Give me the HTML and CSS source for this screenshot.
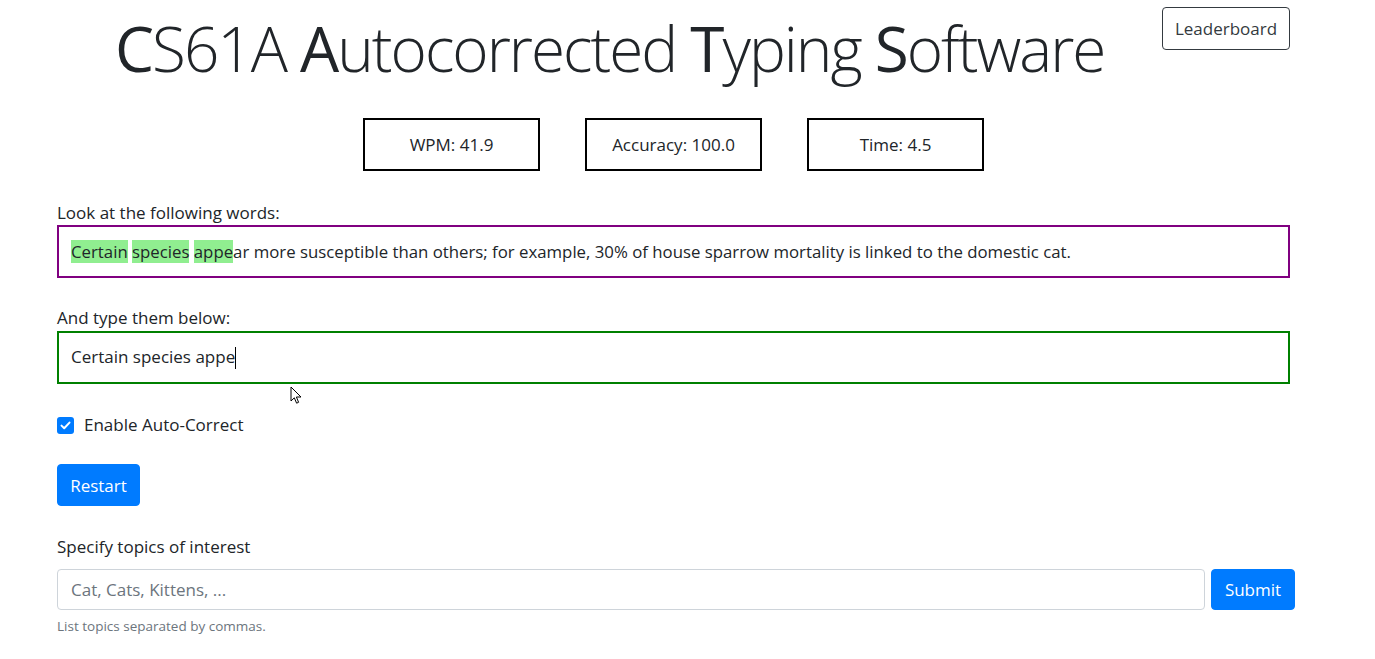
FILE: index.html
```html
<!DOCTYPE html>
<html>
<head>
<meta charset="utf-8">
<link rel="stylesheet" href="styles.css">
</head>
<body>
<div class="page">
  <header class="top">
    <h1 class="title"><span class="cap">C</span>S61A <span class="cap">A</span>utocorrected <span class="cap">T</span>yping <span class="cap">S</span>oftware</h1>
    <button class="btn-outline">Leaderboard</button>
  </header>
  <div class="stats">
    <div class="stat">WPM: 41.9</div>
    <div class="stat">Accuracy: 100.0</div>
    <div class="stat">Time: 4.5</div>
  </div>
  <div class="label first">Look at the following words:</div>
  <div class="prompt"><span class="hl">Certain</span> <span class="hl">species</span> <span class="hl">appe</span>ar more susceptible than others; for example, 30% of house sparrow mortality is linked to the domestic cat.</div>
  <div class="label second">And type them below:</div>
  <div class="typed">Certain species appe<span class="caret"></span></div>
  <label class="check">
    <span class="box"><svg width="11" height="9" viewBox="0 0 11 9"><path d="M1.5 4.6 L4.2 7.2 L9.5 1.6" fill="none" stroke="#fff" stroke-width="2" stroke-linecap="round" stroke-linejoin="round"/></svg></span>
    Enable Auto-Correct
  </label>
  <button class="btn-primary restart">Restart</button>
  <div class="label topics">Specify topics of interest</div>
  <div class="topic-row">
    <div class="topic-input">Cat, Cats, Kittens, ...</div>
    <button class="btn-primary submit">Submit</button>
  </div>
  <div class="hint">List topics separated by commas.</div>
  <svg class="cursor" width="12" height="19" viewBox="0 0 12 19"><path d="M1 1 L1 15 L4.3 11.8 L6.6 17.2 L8.6 16.3 L6.4 11 L11 11 Z" fill="#fff" stroke="#000" stroke-width="1"/></svg>
</div>
</body>
</html>
```
FILE: styles.css
```css
* { box-sizing: border-box; }
html, body { margin: 0; padding: 0; background: #fff; }
body {
  font-family: "Open Sans", "Noto Sans", sans-serif;
  font-size: 17px;
  color: #212529;
}
.page {
  position: relative;
  width: 1375px;
  height: 659px;
  padding: 0 85px 0 57px;
  overflow: hidden;
}
.top {
  display: flex;
  align-items: flex-start;
  justify-content: space-between;
  height: 118px;
}
.title {
  margin: 6px 0 0 58px;
  font-size: 62px;
  font-weight: 300;
  line-height: 84px;
  letter-spacing: -2px;
  white-space: nowrap;
  color: #212529;
}
.cap { font-weight: 400; }
.btn-outline {
  margin-top: 7px;
  width: 128px;
  height: 43px;
  font: inherit;
  color: #343a40;
  background: #fff;
  border: 1px solid #343a40;
  border-radius: 4px;
}
.stats {
  display: flex;
  justify-content: center;
  gap: 45px;
}
.stat {
  width: 177px;
  height: 53px;
  border: 2px solid #000;
  display: flex;
  align-items: center;
  justify-content: center;
  color: #212529;
}
.label { line-height: 24px; }
.label.first { margin-top: 30px; }
.label.second { margin-top: 28px; }
.prompt {
  margin-top: 0;
  height: 53px;
  border: 2px solid #800080;
  padding: 0 12px;
  line-height: 49px;
  white-space: nowrap;
  width: 1233px;
  font-size: 16.8px;
}
.hl { background: #90ee90; }
.typed {
  margin-top: 1px;
  height: 53px;
  border: 2px solid #008000;
  padding: 0 12px;
  line-height: 48px;
  width: 1233px;
}
.caret { display: inline-block; width: 1px; height: 22px; background: #000; vertical-align: middle; }
.check {
  display: flex;
  align-items: center;
  gap: 10px;
  margin-top: 29px;
  line-height: 24px;
}
.box {
  width: 17px; height: 17px;
  background: #007bff;
  border-radius: 3px;
  display: flex; align-items: center; justify-content: center;
}
.btn-primary {
  font: inherit;
  color: #fff;
  background: #007bff;
  border: 1px solid #007bff;
  border-radius: 4px;
}
.restart { display: block; margin-top: 27px; width: 83px; height: 42px; }
.label.topics { margin-top: 29px; }
.topic-row { display: flex; gap: 6px; margin-top: 10px; width: 1238px; }
.topic-input {
  flex: 1;
  height: 41px;
  border: 1px solid #ced4da;
  border-radius: 4px;
  padding: 0 13px;
  display: flex;
  align-items: center;
  color: #6c757d;
}
.submit { width: 84px; height: 41px; }
.hint { margin-top: 7px; font-size: 13.5px; color: #6c757d; }
.cursor { position: absolute; left: 290px; top: 386px; }
```
